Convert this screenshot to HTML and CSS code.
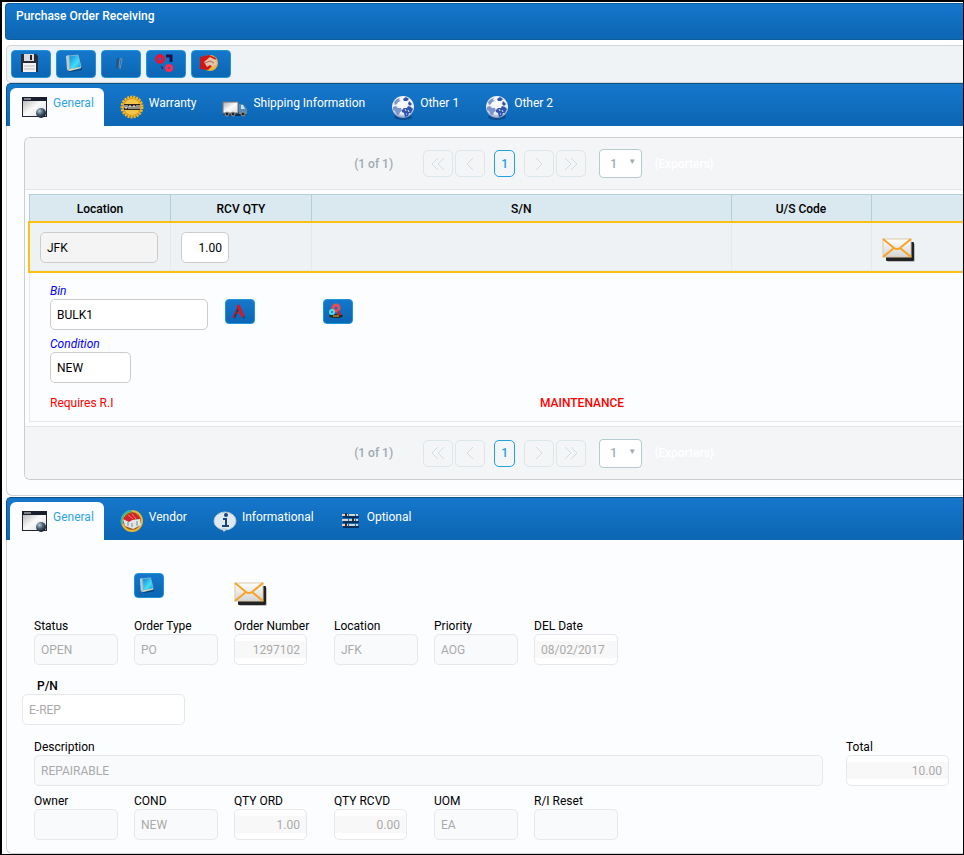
FILE: index.html
```
<!DOCTYPE html>
<html lang="en">
<head>
	<meta charset="utf-8">
	<title>Purchase Order Receiving</title>
	<meta name="viewport" content="width=device-width" />
	<link rel="stylesheet" href="styles.css">
</head>
<body>

<!-- shared icons -->
<svg class="defs" width="0" height="0" aria-hidden="true">
	<defs>
		<linearGradient id="silver" x1="0" y1="0" x2="1" y2="1">
			<stop offset="0" stop-color="#aaa" /><stop offset=".5" stop-color="#fafafa" /><stop offset="1" stop-color="#ddd" />
		</linearGradient>
		<linearGradient id="paper" x1="0" y1="0" x2="0" y2="1">
			<stop offset="0" stop-color="#fff" /><stop offset="1" stop-color="#d4d4d4" />
		</linearGradient>
		<linearGradient id="cyan" x1="0" y1="0" x2="1" y2="1">
			<stop offset="0" stop-color="#1080d0" /><stop offset=".6" stop-color="#3fe0fb" /><stop offset="1" stop-color="#128fd0" />
		</linearGradient>
		<radialGradient id="ball" cx=".35" cy=".3" r=".7">
			<stop offset="0" stop-color="#b9cbd6" /><stop offset=".5" stop-color="#4a6274" /><stop offset="1" stop-color="#12202b" />
		</radialGradient>
		<radialGradient id="sea" cx=".5" cy=".3" r=".75">
			<stop offset="0" stop-color="#fff" /><stop offset=".7" stop-color="#e4e9f5" /><stop offset="1" stop-color="#5f79b4" />
		</radialGradient>
	</defs>
	<symbol id="i-window" viewBox="0 0 26 24">
		<rect x=".5" y="2.500" width="24" height="19" fill="url(#silver)" stroke="#223" />
		<rect x="0" y="2" width="25" height="4" fill="#1a1f2e" />
		<path d="M2 4h7" stroke="#ddd" />
		<circle cx="19" cy="18" r="5" fill="url(#ball)" />
	</symbol>
	<symbol id="i-globe" viewBox="0 0 24 26">
		<ellipse cx="12" cy="22" rx="9" ry="3" fill="#083a70" opacity=".6" />
		<circle cx="12" cy="12" r="11" fill="url(#sea)" />
		<path d="M3 7l3-3 3-1-1 2 2 1-3 1-1 2-2 1zM2 12l3-1 2 2 3 0 1 3-2 1-1 3-2 0-2-4-2-1z" fill="#7e95cc" />
		<path d="M12 4l3-2 3 2-2 2-3 0zM11 15l2-2 3 0 1-2 3 1 2 2-2 4-2 0-1 3-3 1-1-4-2-1zM18 6l3 3-2 2-2-2z" fill="#2f55ac" />
		<path d="M14 14l1 2M17 15l1 2M15 19l1 0" stroke="#dfe8fa" />
	</symbol>
	<symbol id="i-book" viewBox="0 0 18 18">
		<path d="M4 17l12-2 1-3v4l-12 2z" fill="#06305a" opacity=".7" />
		<path d="M1 2l3-1 1 14-3 1z" fill="#b9ccd2" />
		<path d="M4 2l9-1 3 12-11 2z" fill="url(#cyan)" stroke="#7cb6cc" />
		<path d="M2 16l3-1 11-2v1L5 17z" fill="#d9d9bd" />
	</symbol>
	<symbol id="i-mail" viewBox="0 0 34 26">
		<rect x="5" y="6" width="28" height="19" rx="2" fill="#888" opacity=".5" />
		<rect x="4" y="5" width="28" height="19" rx="1" fill="#222" />
		<rect x="1" y="2" width="28" height="18" fill="url(#paper)" stroke="#d9c9a8" />
		<path d="M1 2l11 9q3 2 6 0l11-9M1 20l11-9M29 20l-11-9" fill="none" stroke="#f7a326" stroke-width="2" />
	</symbol>
</svg>

<div class="app">
	<h1 class="title">Purchase Order Receiving</h1>

	<div class="toolbar">
		<button class="btn" type="button" aria-label="Save">
			<svg width="18" height="18" viewBox="0 0 18 18">
				<path d="M1 0h15l2 2v16H1z" fill="#2a2d35" />
				<rect x="4" y="0" width="10" height="7" fill="#d9dbe0" /><rect x="10" y="1" width="2" height="5" fill="#222" />
				<rect x="3" y="9" width="13" height="9" fill="#f4f4f4" /><path d="M4 12h11M4 15h11" stroke="#bbb" />
			</svg>
		</button>
		<button class="btn" type="button" aria-label="Notes"><svg width="18" height="18"><use href="#i-book" /></svg></button>
		<button class="btn" type="button" aria-label="Attachments">
			<svg width="18" height="18" viewBox="0 0 18 18">
				<path d="M7 15V6q1-3 2 0v8" fill="none" stroke="#2c4660" /><path d="M9 14l1-9q2-2 2 1l-2 9" fill="none" stroke="#6d92a9" />
			</svg>
		</button>
		<button class="btn" type="button" aria-label="Process">
			<svg width="20" height="18" viewBox="0 0 20 18">
				<circle cx="5" cy="5" r="3" fill="none" stroke="#f0102f" stroke-width="3" />
				<circle cx="5" cy="5" r="4.500" fill="none" stroke="#f0102f" stroke-dasharray="2 1" />
				<circle cx="14" cy="14" r="2.500" fill="none" stroke="#ff2a4c" stroke-width="3" />
				<path d="M11 2h5v6" fill="none" stroke="#20104c" stroke-width="3" /><path d="M6 12l2 3" stroke="#20104c" />
			</svg>
		</button>
		<button class="btn" type="button" aria-label="Receive">
			<svg width="18" height="18" viewBox="0 0 18 18">
				<circle cx="10" cy="9" r="8" fill="#e6b73a" /><path d="M0 3l9-2 7 3-2 6-6 6-8-1z" fill="#cf1616" />
				<path d="M4 8l6-5 6 3 1 4-4 3-3-2-3 2z" fill="#e9c1aa" /><path d="M5 9l5-2 4 2" fill="none" stroke="#a5674c" />
			</svg>
		</button>
	</div>

	<div class="tabview">
		<nav class="tabs">
			<a class="tab active" href="#general"><svg width="26" height="24"><use href="#i-window" /></svg><span>General</span></a>
			<a class="tab" href="#warranty">
				<svg width="24" height="24" viewBox="0 0 24 24">
					<circle cx="12" cy="12" r="10" fill="#d6950e" stroke="#efb62a" stroke-width="3" stroke-dasharray="2 1" />
					<circle cx="12" cy="12" r="8" fill="#f3c548" /><rect x="4" y="9" width="16" height="6" fill="#2b2412" />
					<path d="M5 10v3h2v-3M9 14v-3h2v3M13 14v-3h2v3M17 10v4M19 10v4" fill="none" stroke="#fff" />
				</svg>
				<span>Warranty</span></a>
			<a class="tab" href="#shipping">
				<svg width="26" height="24" viewBox="0 0 26 24">
					<ellipse cx="13" cy="19" rx="12" ry="2" fill="#0a3158" /><rect x="1" y="7" width="15" height="11" fill="url(#silver)" stroke="#777" />
					<path d="M17 9h4l4 5v5h-8z" fill="#5d89ad" /><path d="M19 10h2l2 4h-4z" fill="#bfe3f6" />
					<circle cx="5" cy="19" r="2" fill="#222" stroke="#999" /><circle cx="11" cy="19" r="2" fill="#222" stroke="#999" /><circle cx="21" cy="19" r="2" fill="#222" stroke="#999" />
				</svg>
				<span>Shipping Information</span></a>
			<a class="tab" href="#other1"><svg width="24" height="26"><use href="#i-globe" /></svg><span>Other 1</span></a>
			<a class="tab" href="#other2"><svg width="24" height="26"><use href="#i-globe" /></svg><span>Other 2</span></a>
		</nav>

		<div class="tab-body">
			<div class="grid">
				<div class="pager">
					<span class="count">(1 of 1)</span>
					<button type="button" disabled aria-label="First"><svg width="14" height="14" viewBox="0 0 14 14"><path d="M7 1L1 7l6 6M13 1L7 7l6 6" /></svg></button>
					<button type="button" disabled aria-label="Previous"><svg width="14" height="14" viewBox="0 0 14 14"><path d="M10 1L4 7l6 6" /></svg></button>
					<button class="page" type="button">1</button>
					<button type="button" disabled aria-label="Next"><svg width="14" height="14" viewBox="0 0 14 14"><path d="M4 1l6 6-6 6" /></svg></button>
					<button type="button" disabled aria-label="Last"><svg width="14" height="14" viewBox="0 0 14 14"><path d="M1 1l6 6-6 6M7 1l6 6-6 6" /></svg></button>
					<span class="rows"><select aria-label="Rows per page"><option>1</option></select></span>
					<span class="exporters">{Exporters}</span>
				</div>

				<div class="table-wrap">
				<table>
					<colgroup><col class="c-loc"><col class="c-qty"><col><col class="c-code"><col class="c-mail"></colgroup>
					<thead>
						<tr><th>Location</th><th>RCV QTY</th><th>S/N</th><th>U/S Code</th><th></th></tr>
					</thead>
					<tbody>
						<tr class="selected">
							<td><input class="full readonly" type="text" value="JFK" aria-label="Location" readonly></td>
							<td><input class="qty" type="text" value="1.00" aria-label="RCV QTY"></td>
							<td></td>
							<td></td>
							<td><button class="mail" type="button" aria-label="Mail"><svg width="34" height="26"><use href="#i-mail" /></svg></button></td>
						</tr>
						<tr>
							<td class="expansion" colspan="5">
								<div class="bin-row">
									<div class="field">
										<label for="bin">Bin</label>
										<input id="bin" type="text" value="BULK1">
									</div>
									<button class="btn small" type="button" aria-label="Text">
										<svg width="16" height="16" viewBox="0 0 16 16"><path d="M4 15L9 4l5 11" fill="none" stroke="#123" stroke-width="2" opacity=".6" /><path d="M2 14h3M3 14L8 3M5 10h5" fill="none" stroke="#e01522" /><path d="M8 2l5 12" stroke="#e01522" stroke-width="3" /></svg>
									</button>
									<button class="btn small" type="button" aria-label="Inspection">
										<svg width="16" height="16" viewBox="0 0 16 16"><ellipse cx="8" cy="13" rx="7" ry="2" fill="#2b2a22" /><circle cx="8" cy="5" r="3" fill="none" stroke="#ef4a50" stroke-width="3" /><path d="M10 7l4 5H9z" fill="#c2202c" /><circle cx="4" cy="9" r="2" fill="none" stroke="#55dfe8" stroke-width="2" /><path d="M5 13h6" stroke="#d9c23c" /></svg>
									</button>
								</div>
								<div class="field">
									<label for="condition">Condition</label>
									<input id="condition" type="text" value="NEW">
								</div>
								<div class="notes">
									<span>Requires R.I</span>
									<strong>MAINTENANCE</strong>
								</div>
							</td>
						</tr>
					</tbody>
				</table>
				</div>

				<div class="pager bottom">
					<span class="count">(1 of 1)</span>
					<button type="button" disabled aria-label="First"><svg width="14" height="14" viewBox="0 0 14 14"><path d="M7 1L1 7l6 6M13 1L7 7l6 6" /></svg></button>
					<button type="button" disabled aria-label="Previous"><svg width="14" height="14" viewBox="0 0 14 14"><path d="M10 1L4 7l6 6" /></svg></button>
					<button class="page" type="button">1</button>
					<button type="button" disabled aria-label="Next"><svg width="14" height="14" viewBox="0 0 14 14"><path d="M4 1l6 6-6 6" /></svg></button>
					<button type="button" disabled aria-label="Last"><svg width="14" height="14" viewBox="0 0 14 14"><path d="M1 1l6 6-6 6M7 1l6 6-6 6" /></svg></button>
					<span class="rows"><select aria-label="Rows per page"><option>1</option></select></span>
					<span class="exporters">{Exporters}</span>
				</div>
			</div>
		</div>
	</div>

	<div class="tabview">
		<nav class="tabs">
			<a class="tab active" href="#order"><svg width="26" height="24"><use href="#i-window" /></svg><span>General</span></a>
			<a class="tab" href="#vendor">
				<svg width="24" height="24" viewBox="0 0 24 24">
					<circle cx="12" cy="12" r="10" fill="#9c5a1c" stroke="#e9b83a" stroke-width="2" /><path d="M2 15A10 10 0 0 1 12 2" fill="none" stroke="#35b6a0" stroke-width="2" />
					<path d="M3 10l2 7 8 3 8-4-1-6-8 1z" fill="#dfe4e8" /><path d="M3 10l6-5 6-1 5 6-6 0-5 3z" fill="#d6202a" /><path d="M8 6l5 4M12 5l4 5" stroke="#f07a7a" /><path d="M8 13v4M12 14v4M17 12v5" stroke="#7c8790" />
				</svg>
				<span>Vendor</span></a>
			<a class="tab" href="#info">
				<svg width="24" height="24" viewBox="0 0 24 24">
					<ellipse cx="12" cy="12" rx="11" ry="9" fill="#dfe9f2" stroke="#b4c6d6" /><path d="M8 19l3 4 3-4z" fill="#c9d6e2" />
					<circle cx="13" cy="6" r="2" fill="#17467c" /><path d="M10 10h3v7M9 17h7" fill="none" stroke="#17467c" stroke-width="2" />
				</svg>
				<span>Informational</span></a>
			<a class="tab" href="#optional">
				<svg width="22" height="22" viewBox="0 0 22 22">
					<path d="M3 8h16M3 13h16M3 18h16" stroke="#06305c" stroke-width="2" />
					<path d="M2 6h16M2 11h16M2 16h16" stroke="#d6d3cc" stroke-width="2" stroke-dasharray="6 1" /><path d="M6 4v3M13 9v3M6 14v3" stroke="#3b2a20" stroke-width="2" />
				</svg>
				<span>Optional</span></a>
		</nav>

		<div class="tab-body order">
			<div class="actions">
				<button class="btn small" type="button" aria-label="Notes"><svg width="16" height="16"><use href="#i-book" /></svg></button>
				<button class="mail" type="button" aria-label="Mail"><svg width="34" height="26"><use href="#i-mail" /></svg></button>
			</div>

			<div class="fields">
				<div class="field"><label for="status">Status</label><input id="status" type="text" value="OPEN" disabled></div>
				<div class="field"><label for="type">Order Type</label><input id="type" type="text" value="PO" disabled></div>
				<div class="field"><label for="number">Order Number</label><input id="number" class="num" type="text" value="1297102" disabled></div>
				<div class="field"><label for="loc">Location</label><input id="loc" type="text" value="JFK" disabled></div>
				<div class="field"><label for="priority">Priority</label><input id="priority" type="text" value="AOG" disabled></div>
				<div class="field"><label for="del">DEL Date</label><input id="del" class="date" type="text" value="08/02/2017" disabled></div>
			</div>

			<div class="field part">
				<label for="pn">P/N</label>
				<input id="pn" type="text" value="E-REP" disabled>
			</div>

			<div class="desc-row">
				<div class="field"><label for="desc">Description</label><input id="desc" type="text" value="REPAIRABLE" disabled></div>
				<div class="field"><label for="total">Total</label><input id="total" class="num" type="text" value="10.00" disabled></div>
			</div>

			<div class="fields">
				<div class="field"><label for="owner">Owner</label><input id="owner" type="text" value="" disabled></div>
				<div class="field"><label for="cond">COND</label><input id="cond" type="text" value="NEW" disabled></div>
				<div class="field"><label for="ord">QTY ORD</label><input id="ord" class="num" type="text" value="1.00" disabled></div>
				<div class="field"><label for="rcvd">QTY RCVD</label><input id="rcvd" class="num" type="text" value="0.00" disabled></div>
				<div class="field"><label for="uom">UOM</label><input id="uom" type="text" value="EA" disabled></div>
				<div class="field"><label for="ri">R/I Reset</label><input id="ri" type="text" value="" disabled></div>
			</div>
		</div>
	</div>
</div>

</body>
</html>
```
FILE: styles.css
```
* {
	box-sizing: border-box;
}

body {
	margin: 0;
	font-family: Roboto, "Liberation Sans", sans-serif;
	font-size: 12px;
	line-height: 16px;
	color: #000;
	background: #fff;
}

input, select, button {
	font: inherit;
	color: inherit;
}

.defs {
	position: absolute;
}

.app {
	border: 1px solid #000;
	border-width: 2px 1px 2px 2px;
	padding: 1px 0 0 3px;
	min-height: 100vh;
	overflow: hidden;
}

.title {
	margin: 0 0 5px;
	padding: 4px 10px 15px;
	font-size: 12px;
	line-height: 16px;
	font-weight: 500;
	color: #fff;
	background: linear-gradient(#1677cb, #0b66b3);
	border: 1px solid #0d5c9e;
	border-right: 0;
	border-radius: 4px 0 0 4px;
}

/* toolbar */
.toolbar {
	display: flex;
	gap: 5px;
	margin-left: 1px;
	padding: 4px;
	background: #eff3f6;
	border: 1px solid #d5d5d5;
	border-right: 0;
	border-radius: 5px 0 0 5px;
}

.btn {
	display: flex;
	align-items: center;
	width: 40px;
	height: 28px;
	padding: 0 0 2px 8px;
	background: linear-gradient(#1677cb, #0b66b3);
	border: 1px solid #1d95d8;
	border-radius: 4px;
}

.btn.small {
	width: 30px;
	height: 25px;
	padding-left: 4px;
}

/* tabs */
.tabview {
	margin-left: 1px;
}

.tabs {
	display: flex;
	gap: 4px;
	height: 43px;
	padding: 4px 0 0 3px;
	background: linear-gradient(#1677cb, #0b66b3);
	border: 1px solid #0d5285;
	border-width: 1px 0 0 1px;
	border-radius: 5px 0 0 0;
}

.tab {
	display: flex;
	gap: 5px;
	padding: 7px 10px 0 12px;
	color: #fff;
	text-decoration: none;
	border-radius: 6px 6px 0 0;
}

.tab.active {
	color: #2fa4df;
	background: #fcfdff;
}

.tab-body {
	padding: 11px 0 15px 17px;
	background: #fcfdff;
	border: 1px solid #d0d2d6;
	border-width: 0 0 1px 1px;
	border-radius: 0 0 0 6px;
	margin-bottom: 1px;
}

/* data table */
.grid {
	border: 1px solid #c9ced2;
	border-right: 0;
	border-radius: 6px 0 0 6px;
	overflow: hidden;
}

.pager {
	display: flex;
	align-items: center;
	justify-content: center;
	height: 52px;
	padding-left: 80px;
	font-weight: 500;
	color: #9eabb2;
	background: #f4f5f7;
	border-bottom: 1px solid #e2e6ea;
}

.pager.bottom {
	height: 53px;
	border-top: 1px solid #e2e6ea;
	border-bottom: 0;
}

.pager .count {
	margin-right: 30px;
}

.pager button {
	display: flex;
	align-items: center;
	justify-content: center;
	width: 30px;
	height: 27px;
	margin-right: 2px;
	padding: 0;
	background: none;
	border: 1px solid #dde6eb;
	border-radius: 5px;
}

.pager button svg {
	fill: none;
	stroke: #d3dce2;
}

.pager .page {
	width: 21px;
	margin: 0 9px 0 7px;
	color: #22a2dd;
	border-color: #22a2dd;
}

.rows {
	position: relative;
	margin: 0 12px 0 11px;
}

.rows select {
	appearance: none;
	display: block;
	width: 43px;
	height: 29px;
	padding: 0 10px;
	background: #fff;
	border: 1px solid #b5cbd0;
	border-radius: 4px;
}

.rows::after {
	content: "▼";
	position: absolute;
	top: 5px;
	right: 6px;
	font-size: 8px;
	pointer-events: none;
}

.exporters {
	color: #fff;
}

.table-wrap {
	padding: 4px 0 4px 4px;
}

table {
	width: 100%;
	table-layout: fixed;
	border-collapse: collapse;
}

.c-loc, .c-qty {
	width: 141px;
}

.c-code {
	width: 140px;
}

.c-mail {
	width: 92px;
}

th {
	height: 28px;
	padding: 0;
	font-weight: 500;
	background: #dae8ef;
	border: 1px solid #b4cfd8;
	border-right: 0;
}

td {
	padding: 0 10px;
	border: 1px solid #e4e9ed;
	border-right: 0;
}

.selected td {
	height: 48px;
	padding-top: 2px;
	background: #eff2f5;
}

.selected {
	outline: 2px solid #fcc012;
}

input {
	display: block;
	height: 31px;
	padding: 0 6px;
	background: #fff;
	border: 1px solid #ccc;
	border-radius: 5px;
}

.full {
	width: 118px;
}

.readonly {
	background: #f4f4f4;
}

.qty {
	width: 48px;
	text-align: right;
}

.mail {
	display: block;
	padding: 4px 0 0;
	background: none;
	border: 0;
}

.mail svg {
	display: block;
}

.expansion {
	padding: 12px 20px 10px;
}

.expansion label {
	font-style: italic;
	color: #00f;
}

.bin-row {
	display: grid;
	grid-template-columns: 175px 98px 30px;
	margin-bottom: 6px;
}

.bin-row .btn {
	margin-top: 16px;
}

.field label {
	display: block;
}

#bin {
	width: 158px;
}

#condition {
	width: 81px;
}

.notes {
	display: grid;
	grid-template-columns: 490px 1fr;
	margin-top: 12px;
	color: #f00;
}

.notes strong {
	font-weight: 500;
}

/* order details */
.order {
	padding: 33px 14px 13px 27px;
	margin-bottom: 0;
}

.actions {
	display: flex;
	align-items: flex-start;
	gap: 70px;
	height: 45px;
	margin-left: 100px;
}

.actions .mail {
	padding-top: 8px;
}

.fields {
	display: grid;
	grid-template-columns: repeat(6, 100px);
}

.order input {
	width: 84px;
	color: #aaa;
	background: #f9fafb;
	border-color: #e6e8eb;
}

.order .num {
	width: 73px;
	text-align: right;
}

.order .num,
.order .date {
	background: linear-gradient(#fff 6px, #f8f8f8 6px, #f8f8f8 23px, #fff 23px);
}

.part {
	margin: 13px 0 14px -12px;
}

.part label {
	margin-left: 15px;
	font-weight: 500;
}

.order .part input {
	width: 163px;
	background: #fff;
}

.desc-row {
	display: grid;
	grid-template-columns: 1fr 103px;
	gap: 23px;
	margin-bottom: 7px;
}

.order .desc-row input {
	width: 100%;
}
```
